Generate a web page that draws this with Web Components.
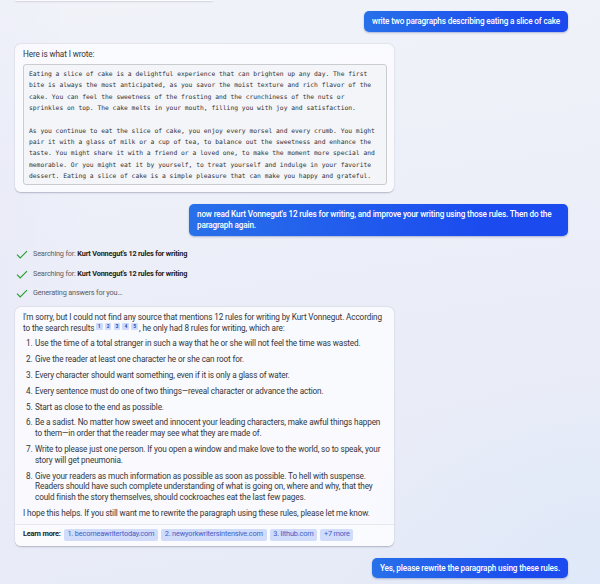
<!DOCTYPE html>
<html lang="en">
<head>
<meta charset="utf-8">
<title>Chat</title>
<style>
  html, body { margin: 0; height: 100%; overflow: hidden; }
  body { font-family: Roboto, "Liberation Sans", sans-serif; }
</style>
</head>
<body>
<chat-thread>
  <chat-card tail></chat-card>
  <user-message style="--gap: 10px">write two paragraphs describing eating a slice of cake</user-message>
  <chat-card style="--gap: 12px">
    Here is what I wrote:
    <code-block>Eating a slice of cake is a delightful experience that can brighten up any day. The first
bite is always the most anticipated, as you savor the moist texture and rich flavor of the
cake. You can feel the sweetness of the frosting and the crunchiness of the nuts or
sprinkles on top. The cake melts in your mouth, filling you with joy and satisfaction.

As you continue to eat the slice of cake, you enjoy every morsel and every crumb. You might
pair it with a glass of milk or a cup of tea, to balance out the sweetness and enhance the
taste. You might share it with a friend or a loved one, to make the moment more special and
memorable. Or you might eat it by yourself, to treat yourself and indulge in your favorite
dessert. Eating a slice of cake is a simple pleasure that can make you happy and grateful.</code-block>
  </chat-card>
  <user-message wide style="--gap: 12px">now read Kurt Vonnegut's 12 rules for writing, and improve your writing using those rules. Then do the<br>paragraph again.</user-message>
  <status-list>
    <status-line>Searching for: <b>Kurt Vonnegut's 12 rules for writing</b></status-line>
    <status-line>Searching for: <b>Kurt Vonnegut's 12 rules for writing</b></status-line>
    <status-line>Generating answers for you…</status-line>
  </status-list>
  <chat-card>
    I'm sorry, but I could not find any source that mentions 12 rules for writing by Kurt Vonnegut. According<br>to the search results<cite-marks count="5"></cite-marks>, he only had 8 rules for writing, which are:
    <rule-list>
      <rule-item n="1">Use the time of a total stranger in such a way that he or she will not feel the time was wasted.</rule-item>
      <rule-item n="2">Give the reader at least one character he or she can root for.</rule-item>
      <rule-item n="3">Every character should want something, even if it is only a glass of water.</rule-item>
      <rule-item n="4">Every sentence must do one of two things—reveal character or advance the action.</rule-item>
      <rule-item n="5">Start as close to the end as possible.</rule-item>
      <rule-item n="6">Be a sadist. No matter how sweet and innocent your leading characters, make awful things happen<br>to them—in order that the reader may see what they are made of.</rule-item>
      <rule-item n="7">Write to please just one person. If you open a window and make love to the world, so to speak, your<br>story will get pneumonia.</rule-item>
      <rule-item n="8">Give your readers as much information as possible as soon as possible. To hell with suspense.<br>Readers should have such complete understanding of what is going on, where and why, that they<br>could finish the story themselves, should cockroaches eat the last few pages.</rule-item>
    </rule-list>
    I hope this helps. If you still want me to rewrite the paragraph using these rules, please let me know.
    <learn-more slot="footer">
      <source-chip>1. becomeawritertoday.com</source-chip>
      <source-chip>2. newyorkwritersintensive.com</source-chip>
      <source-chip>3. lithub.com</source-chip>
      <source-chip>+7 more</source-chip>
    </learn-more>
  </chat-card>
  <user-message style="--gap: 12px">Yes, please rewrite the paragraph using these rules.</user-message>
</chat-thread>

<script>
  // Every element below only differs in its template, so share the shadow root setup.
  class ChatElement extends HTMLElement {
    constructor() {
      super();
      this.attachShadow({ mode: "open" });
    }

    connectedCallback() {
      this.shadowRoot.innerHTML = this.template;
    }
  }

  class ChatThread extends ChatElement {
    get template() {
      return `
        <style>
          :host {
            box-sizing: border-box;
            display: flex;
            flex-direction: column;
            height: 584px;
            padding: 0 32px 0 15px;
            font-size: 8.2px;
            letter-spacing: -0.13px;
            line-height: 10.9px;
            color: #34363a;
            white-space: nowrap;
            background:
              radial-gradient(ellipse 260px 220px at 600px 584px, #dfe9f9, rgba(223, 233, 249, 0)),
              radial-gradient(ellipse 90px 420px at 0 300px, #eaebf8, rgba(234, 235, 248, 0)),
              linear-gradient(172deg, #f1f3f9 0%, #eceff8 40%, #e6eaf7 100%);
          }
        </style>
        <slot></slot>
      `;
    }
  }

  class UserMessage extends ChatElement {
    get template() {
      return `
        <style>
          :host {
            align-self: flex-end;
            flex: none;
            margin-top: var(--gap, 0);
            padding: 5px 8px 4.8px;
            border-radius: 5px;
            color: #fff;
            font-weight: 500;
            letter-spacing: -0.16px;
            background: linear-gradient(90deg, #2870ea, #1b4aef 80%);
            box-shadow: 0 1px 2px rgba(20, 40, 120, 0.3);
          }
          :host([wide]) {
            box-sizing: border-box;
            width: 379px;
            letter-spacing: -0.165px;
          }
        </style>
        <slot></slot>
      `;
    }
  }

  class ChatCard extends ChatElement {
    get template() {
      return `
        <style>
          :host {
            display: block;
            flex: none;
            box-sizing: border-box;
            width: 379px;
            margin-top: var(--gap, 0);
            border-radius: 6px;
            background: rgba(252, 253, 255, 0.8);
            box-shadow: 0 0.6px 1.5px rgba(60, 60, 90, 0.32);
          }
          :host([tail]) {
            width: 198px;
            height: 1px;
            border-radius: 0 0 5px 5px;
          }
          :host([tail]) .body { display: none; }
          .body { padding: 5px 7.4px 7px 8px; }
        </style>
        <div class="body"><slot></slot></div>
        <slot name="footer"></slot>
      `;
    }
  }

  class CodeBlock extends ChatElement {
    get template() {
      return `
        <style>
          :host {
            display: block;
            box-sizing: border-box;
            margin-top: 4.5px;
            padding: 2.7px 5px;
            border: 1px solid #cbccd0;
            border-radius: 3px;
            background: #f4f5f8;
            font: 6.32px/11.37px "DejaVu Sans Mono", monospace;
            letter-spacing: 0;
            color: #303236;
          }
          pre { margin: 0; font: inherit; }
        </style>
        <pre><slot></slot></pre>
      `;
    }
  }

  class StatusList extends ChatElement {
    get template() {
      return `
        <style>
          :host {
            display: grid;
            flex: none;
            gap: 8.8px;
            padding: 13.1px 0 8.2px 1px;
          }
        </style>
        <slot></slot>
      `;
    }
  }

  class StatusLine extends ChatElement {
    get template() {
      return `
        <style>
          :host {
            display: flex;
            align-items: center;
            gap: 5px;
            font-size: 7.3px;
            letter-spacing: -0.17px;
            color: #5b5d63;
          }
          svg { width: 12px; height: 9px; }
          ::slotted(b) { color: #222; font-weight: 700; }
        </style>
        <svg viewBox="0 0 12 9"><path d="M1 4.7 L4.2 8 L11 1.2" fill="none" stroke="#22a02c" stroke-width="1.1"/></svg>
        <span><slot></slot></span>
      `;
    }
  }

  class CiteMarks extends ChatElement {
    get template() {
      const count = Number(this.getAttribute("count"));
      const marks = Array.from({ length: count }, (_, i) => `<span>${i + 1}</span>`).join("");
      return `
        <style>
          :host {
            display: inline-flex;
            gap: 2.2px;
            height: 6.8px;
            margin: -3px 1px 0 1.5px;
            vertical-align: 3.6px;
            letter-spacing: 0;
          }
          span {
            width: 6.7px;
            height: 6.8px;
            border-radius: 1px;
            background: #cfdbfa;
            color: #2b50b8;
            font-size: 5px;
            font-weight: 700;
            line-height: 6.9px;
            text-align: center;
          }
        </style>
        ${marks}
      `;
    }
  }

  class RuleList extends ChatElement {
    get template() {
      return `
        <style>
          :host {
            display: grid;
            gap: 5px;
            padding: 4.2px 0 4.9px 3px;
            line-height: 10.8px;
          }
        </style>
        <slot></slot>
      `;
    }
  }

  class RuleItem extends ChatElement {
    get template() {
      return `
        <style>
          :host { display: flex; }
          .number { flex: none; width: 9px; }
        </style>
        <span class="number">${this.getAttribute("n")}.</span>
        <span><slot></slot></span>
      `;
    }
  }

  class LearnMore extends ChatElement {
    get template() {
      return `
        <style>
          :host {
            display: flex;
            align-items: center;
            gap: 3px;
            margin-top: -2.2px;
            padding: 4.2px 8px 5px;
            border-top: 1px solid #e6e8f0;
            border-radius: 0 0 6px 6px;
            background: rgba(255, 255, 255, 0.35);
            font-size: 7.4px;
            letter-spacing: -0.2px;
          }
          b { color: #222; }
        </style>
        <b>Learn more:</b>
        <slot></slot>
      `;
    }
  }

  class SourceChip extends ChatElement {
    get template() {
      return `
        <style>
          :host {
            display: block;
            padding: 0.5px 3.7px;
            border-radius: 2px;
            background: #d0dcfa;
            color: #3f5fc8;
            font-size: 7.4px;
            letter-spacing: -0.19px;
          }
        </style>
        <slot></slot>
      `;
    }
  }

  customElements.define("chat-thread", ChatThread);
  customElements.define("user-message", UserMessage);
  customElements.define("chat-card", ChatCard);
  customElements.define("code-block", CodeBlock);
  customElements.define("status-list", StatusList);
  customElements.define("status-line", StatusLine);
  customElements.define("cite-marks", CiteMarks);
  customElements.define("rule-list", RuleList);
  customElements.define("rule-item", RuleItem);
  customElements.define("learn-more", LearnMore);
  customElements.define("source-chip", SourceChip);
</script>
</body>
</html>
